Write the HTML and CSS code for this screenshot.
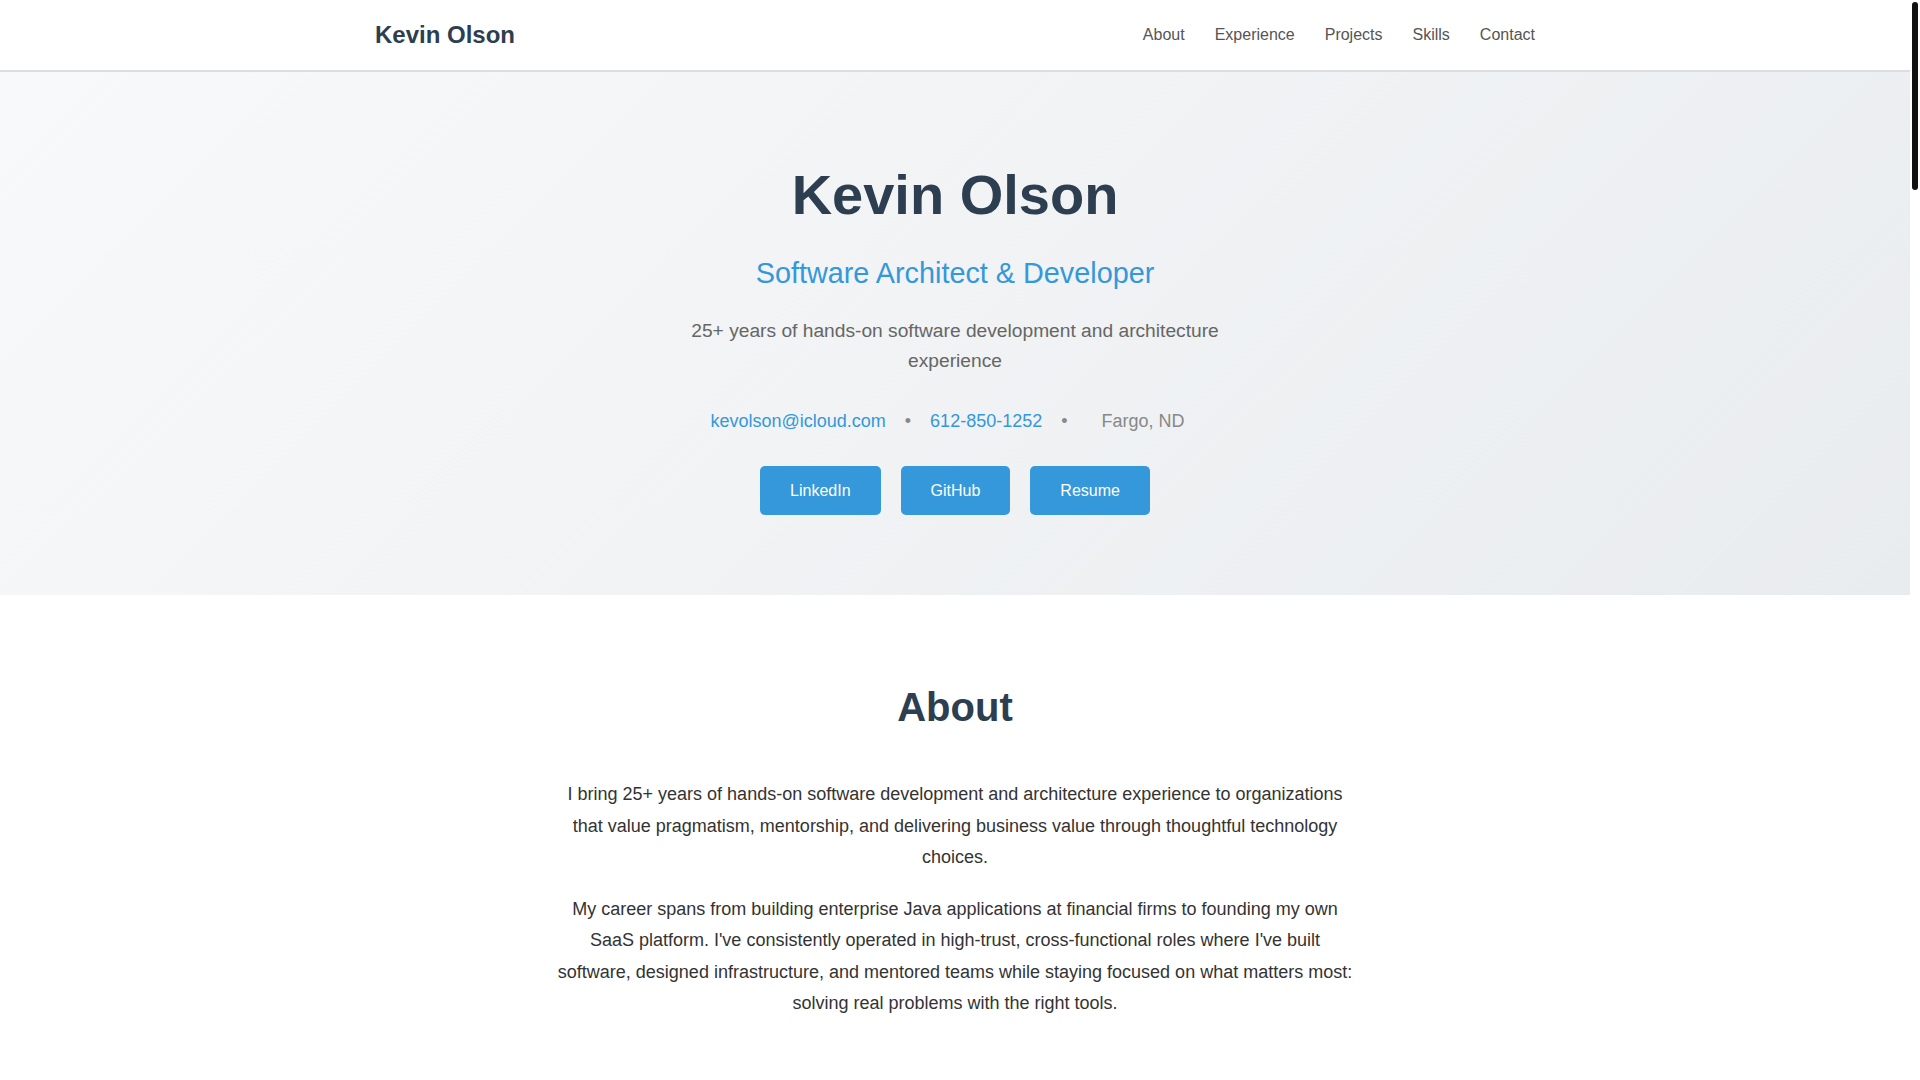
FILE: index.html
```html
<!DOCTYPE html>
<html lang="en">
<head>
<meta charset="utf-8">
<title>Kevin Olson - Software Architect &amp; Developer</title>
<link rel="stylesheet" href="styles.css">
</head>
<body>
<div class="page">
<nav class="navbar">
  <div class="container nav-inner">
    <a class="brand" href="#">Kevin Olson</a>
    <ul class="nav-links">
      <li><a href="#about">About</a></li>
      <li><a href="#experience">Experience</a></li>
      <li><a href="#projects">Projects</a></li>
      <li><a href="#skills">Skills</a></li>
      <li><a href="#contact">Contact</a></li>
    </ul>
  </div>
</nav>

<header class="hero">
  <div class="container hero-inner">
    <h1 class="hero-title">Kevin Olson</h1>
    <p class="hero-subtitle">Software Architect &amp; Developer</p>
    <p class="hero-desc">25+ years of hands-on software development and architecture experience</p>
    <div class="hero-contact">
      <a href="#">kevolson@icloud.com</a>
      <span class="sep">•</span>
      <a href="#">612-850-1252</a>
      <span class="sep">•</span>
      <span class="location">Fargo, ND</span>
    </div>
    <div class="hero-buttons">
      <a class="btn" href="#">LinkedIn</a>
      <a class="btn" href="#">GitHub</a>
      <a class="btn" href="#">Resume</a>
    </div>
  </div>
</header>

<section class="section" id="about">
  <div class="container">
    <h2 class="section-title">About</h2>
    <div class="about-text">
      <p>I bring 25+ years of hands-on software development and architecture experience to organizations that value pragmatism, mentorship, and delivering business value through thoughtful technology choices.</p>
      <p>My career spans from building enterprise Java applications at financial firms to founding my own SaaS platform. I've consistently operated in high-trust, cross-functional roles where I've built software, designed infrastructure, and mentored teams while staying focused on what matters most: solving real problems with the right tools.</p>
    </div>
  </div>
</section>
</div>
<div class="scrollbar" aria-hidden="true">
  <div class="scrollbar-thumb"></div>
</div>
</body>
</html>
```

FILE: styles.css
```css
* {
  box-sizing: border-box;
}

html,
body {
  height: 100%;
  overflow: hidden;
}

body {
  margin: 0;
  display: flex;
  font-family: "Liberation Sans", Arial, sans-serif;
  font-size: 16px;
  line-height: 1.6;
  color: #333;
  background: #fff;
}

.page {
  flex: 1;
  min-width: 0;
}

.scrollbar {
  flex: none;
  width: 10px;
  background: #fff;
}

.scrollbar-thumb {
  margin: 2px;
  height: 188px;
  background: #111;
  border-radius: 3px;
}

a {
  text-decoration: none;
}

.container {
  max-width: 1200px;
  margin: 0 auto;
  padding: 0 20px;
}

.navbar {
  background: #fff;
  border-bottom: 2px solid #dcdde0;
}

.nav-inner {
  display: flex;
  justify-content: space-between;
  align-items: center;
  padding-top: 16px;
  padding-bottom: 16px;
}

.brand {
  font-size: 24px;
  font-weight: bold;
  color: #2c3e50;
}

.nav-links {
  list-style: none;
  margin: 0;
  padding: 0;
  display: flex;
  gap: 30px;
}

.nav-links a {
  color: #555;
  font-size: 16px;
}

.hero {
  background: linear-gradient(135deg, #f8f9fa 0%, #e9ecef 100%);
  padding: 78px 0 80px;
  text-align: center;
}

.hero-inner {
  display: flex;
  flex-direction: column;
  align-items: center;
}

.hero-title {
  margin: 0 0 10px;
  font-size: 56px;
  font-weight: bold;
  color: #2c3e50;
}

.hero-subtitle {
  margin: 0 0 20px;
  font-size: 28.8px;
  color: #3498db;
}

.hero-desc {
  margin: 0 0 31px;
  max-width: 600px;
  font-size: 19.2px;
  line-height: 1.56;
  color: #666;
}

.hero-contact {
  display: flex;
  align-items: center;
  justify-content: center;
  font-size: 18px;
  margin-bottom: 30px;
}

.hero-contact a {
  color: #3498db;
}

.sep {
  color: #888;
  margin: 0 19px;
}

.location {
  color: #888;
  padding: 0 15px;
}

.hero-buttons {
  display: flex;
  justify-content: center;
  gap: 20px;
}

.btn {
  display: inline-block;
  padding: 12px 30px;
  background: #3498db;
  color: #fff;
  font-size: 16px;
  border-radius: 5px;
}

.section {
  padding: 80px 0;
}

.section-title {
  margin: 0 0 40px;
  text-align: center;
  font-size: 40px;
  font-weight: bold;
  color: #2c3e50;
}

.about-text {
  max-width: 800px;
  margin: 0 auto;
  text-align: center;
  font-size: 18px;
  line-height: 1.75;
  color: #333;
}

.about-text p {
  margin: 0 0 20px;
}
```
